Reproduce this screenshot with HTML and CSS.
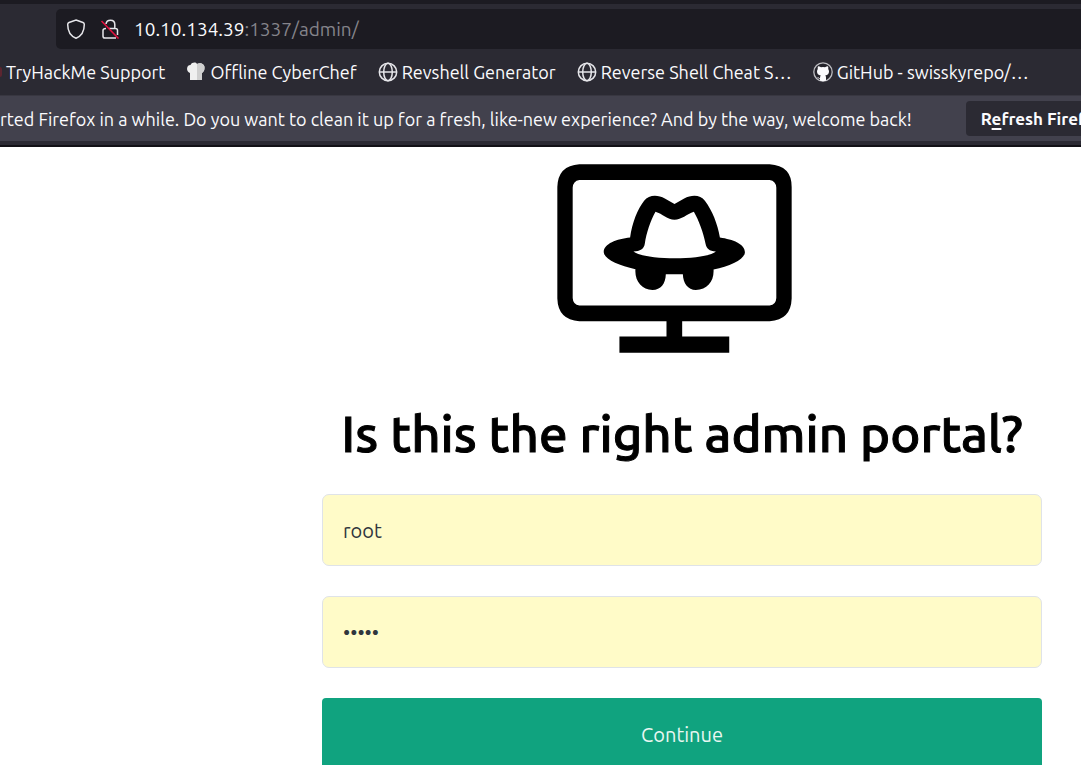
FILE: index.html
```html
<!DOCTYPE html>
<html lang="en">
<head>
<meta charset="utf-8">
<title>Admin portal</title>
<link rel="stylesheet" href="styles.css">
</head>
<body>
<header class="chrome">
  <div class="urlbar">
    <svg class="icon" viewBox="0 0 20 20" aria-hidden="true"><path class="line" d="M10 1 L17 3.500 Q18.300 4 18.300 5.500 C18.300 12 15.500 17 10 19.200 C4.500 17 1.700 12 1.700 5.500 Q1.700 4 3 3.500 Z"/></svg>
    <svg class="icon" viewBox="0 0 20 20" aria-hidden="true"><path class="line" d="M6 5 Q6.500 1.200 10.500 1.200 Q14.800 1.200 14.800 5.500 V9 M9 9.500 H15.500 Q17.500 9.500 17.500 11.500 V16 M6 9.500 Q3 9.500 3 11.500 V17.200 Q3 19 5 19 H16"/><path class="slash" d="M1.500 2 L18.500 19.500"/></svg>
    <span class="address"><span class="host">10.10.134.39</span>:1337/admin/</span>
  </div>
  <nav class="bookmarks" aria-label="Bookmarks">
    <a href="#"><i class="red-dot"></i>TryHackMe Support</a>
    <a href="#"><svg class="fav" viewBox="0 0 20 20" aria-hidden="true"><path fill="#efefef" d="M4 18 V11 C0 10 0 3 4.500 3 C6 0 10 0 11 2 C14 0 19 2 18.500 6 C18.500 9 17 10 16 11 V18 Z"/><path fill="#cfcfcf" d="M11 2 C14 0 19 2 18.500 6 C18.500 9 17 10 16 11 V18 H11 Z"/></svg>Offline CyberChef</a>
    <a href="#"><svg class="fav" viewBox="0 0 20 20" aria-hidden="true"><g class="line"><circle cx="10" cy="10" r="8.700"/><ellipse cx="10" cy="10" rx="4.300" ry="8.700"/><path d="M1.300 10 H18.700"/></g></svg>Revshell Generator</a>
    <a href="#"><svg class="fav" viewBox="0 0 20 20" aria-hidden="true"><g class="line"><circle cx="10" cy="10" r="8.700"/><ellipse cx="10" cy="10" rx="4.300" ry="8.700"/><path d="M1.300 10 H18.700"/></g></svg>Reverse Shell Cheat S…</a>
    <a href="#"><svg class="fav" viewBox="0 0 20 20" aria-hidden="true"><circle cx="10" cy="10" r="9.200" fill="#24232b" stroke="#bdbdc2" stroke-width="1.300"/><path fill="#fbfbfe" d="M5 4.200 Q6.500 4.300 8 5.300 Q10 4.800 12 5.300 Q13.500 4.300 15 4.200 Q15.600 5.800 15.200 7 Q16 8 16 9.500 Q16 13 12.200 13.500 Q13 14.200 13 15.500 V18.800 Q10 19.600 7 18.800 V16.800 Q5 17 4.200 15 Q5.500 15 6 16 H7 Q7 14 7.800 13.500 Q4 13 4 9.500 Q4 8 4.800 7 Q4.400 5.800 5 4.200 Z"/></svg>GitHub - swisskyrepo/…</a>
  </nav>
</header>
<aside class="notice">
  <span class="notice-text">rted Firefox in a while. Do you want to clean it up for a fresh, like-new experience? And by the way, welcome back!</span>
  <button type="button" class="refresh">R<u>e</u>fresh Firef</button>
</aside>
<main class="portal">
  <svg class="logo" viewBox="51 41 704 566" role="img" aria-label="Monitor with hat">
    <path fill-rule="evenodd" d="M118 42 H688 Q754 46 754 110 V444 Q752 508 688 512 H118 Q54 508 52 444 V110 Q54 46 118 42 Z M118 89 Q99 92 98 112 V442 Q99 462 118 465 H688 Q707 462 708 442 V112 Q707 92 688 89 Z"/>
    <path d="M379 510 H426 V558 H567 V606 H238 V558 H379 Z"/>
    <path fill-rule="evenodd" d="M270 261 C276 218 292 176 312 151 C326 132 353 132 374 144 L403 161 L432 144 C454 132 481 132 494 151 C516 180 532 220 539 261 C578 267 614 280 614 305 C614 326 570 347 520 357 C522 393 501 418 467 418 C443 418 429 398 428 371 H377 C376 400 362 418 337 418 C305 418 283 391 286 356 C235 345 191 326 191 304 C191 280 230 265 270 261 Z M346 184 C331 212 319 246 314 280 C312 295 300 303 280 303 C310 330 500 330 527 303 C507 302 499 295 496 280 C489 244 476 211 461 184 C440 191 424 208 403 208 C382 208 367 190 346 184 Z"/>
  </svg>
  <h1>Is this the right admin portal?</h1>
  <form class="login">
    <input type="text" value="root" aria-label="Username">
    <input type="password" value="admin" aria-label="Password">
    <button type="button">Continue</button>
  </form>
</main>
</body>
</html>
```
FILE: styles.css
```css
* { box-sizing: border-box; }
body {
  margin: 0;
  overflow-x: hidden;
  background: #fff;
  color: #000;
  font-family: Ubuntu, "Noto Sans", sans-serif;
  font-size: 18px;
}
button, input { font: inherit; }
.chrome {
  background: #2b2a33;
  border-top: 4px solid #1c1b22;
  padding-top: 5px;
  color: #fbfbfe;
}
.urlbar {
  display: flex;
  align-items: center;
  gap: 14px;
  height: 40px;
  margin-left: 56px;
  padding-left: 10px;
  border-radius: 5px 0 0 5px;
  background: #1c1b22;
}
.icon, .fav { width: 20px; height: 20px; flex: none; }
.line { fill: none; stroke: #e6e6ea; stroke-width: 1.5; }
.slash { stroke: #e2123f; stroke-width: 1.6; }
.address { color: #85848b; font-size: 19px; }
.host { color: #fbfbfe; }
.bookmarks {
  display: flex;
  align-items: center;
  gap: 21px;
  height: 46px;
  white-space: nowrap;
}
.bookmarks a {
  display: flex;
  align-items: center;
  gap: 4px;
  color: #fbfbfe;
  text-decoration: none;
}
.red-dot { width: 2px; height: 10px; background: #5c2530; border-radius: 0 2px 2px 0; }
.notice {
  display: flex;
  align-items: center;
  gap: 54px;
  height: 50px;
  overflow: hidden;
  white-space: nowrap;
  background: #42414d;
  color: #fbfbfe;
  border-top: 1px solid #383741;
  border-bottom: 4px solid #2b2a33;
}
.notice-text { flex: none; }
.refresh {
  flex: 1 0 auto;
  height: 35px;
  padding: 0 0 0 15px;
  border: 0;
  border-radius: 4px 0 0 4px;
  background: #2b2a33;
  color: #fbfbfe;
  font-size: 17px;
  font-weight: 700;
  text-align: left;
}
.refresh u { text-underline-offset: 3px; text-decoration-thickness: 2px; }
.portal {
  display: flex;
  flex-direction: column;
  padding: 17px 39px 0 322px;
  border-top: 2px solid #121116;
}
.logo { width: 235px; height: 189px; align-self: center; margin-right: 16px; }
h1 {
  margin: 44px 0 25px;
  text-align: center;
  white-space: nowrap;
  font-family: "Ubuntu Medium", Ubuntu, "Noto Sans", sans-serif;
  font-size: 51px;
  line-height: 72px;
  font-weight: 500;
  -webkit-text-stroke: 1px #000;
}
.login { display: flex; flex-direction: column; gap: 30px; }
.login input {
  width: 100%;
  height: 72px;
  padding: 0 20px;
  border: 1px solid #dfe3e8;
  border-radius: 7px;
  background: #fffbc8;
  color: #30363d;
  font-size: 20px;
}
.login button {
  height: 67px;
  padding: 6px 0 0;
  border: 0;
  border-radius: 4px 4px 0 0;
  background: #10a37f;
  color: #e9f7f2;
  font-size: 20px;
}
```
